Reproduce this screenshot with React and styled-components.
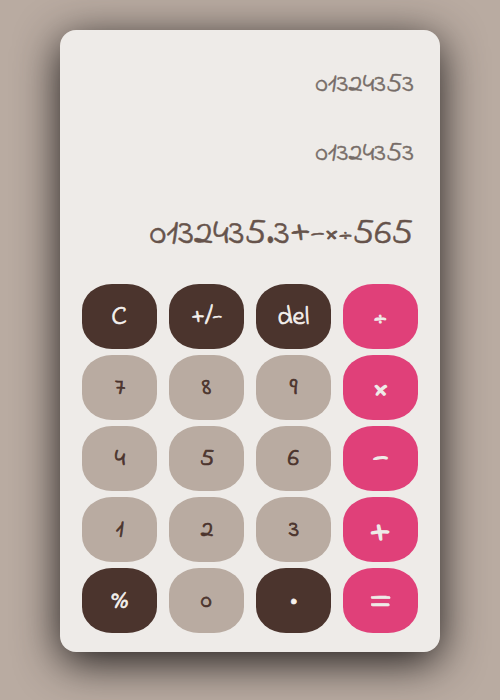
import React from "react";
import styled, { createGlobalStyle, css } from "styled-components";

const GlobalStyle = createGlobalStyle`
  * { box-sizing: border-box; }
  body {
    margin: 0;
    background: #b9aba1;
    font-family: "Indie Flower", "Open Sans", sans-serif;
  }
`;

const Page = styled.main`
  height: 700px;
  padding-top: 30px;
  overflow: hidden;
`;

const Calculator = styled.section`
  width: 380px;
  height: 622px;
  margin: 0 auto;
  padding: 20px 22px 19px;
  border-radius: 16px;
  background: #eeebe8;
  box-shadow: 0 10px 44px #1e1a1a;
`;

const Display = styled.div`
  display: flex;
  flex-direction: column;
  height: 234px;
`;

const HistoryLine = styled.div`
  height: 69px;
  padding-right: 4px;
  line-height: 69px;
  font-size: 26.5px;
  text-align: right;
  color: #766c67;
  transform: scaleX(1.07);
  transform-origin: calc(100% - 4px) 50%;
  -webkit-text-stroke: 0.4px currentColor;
`;

const CurrentLine = styled.div`
  height: 90px;
  padding-right: 5px;
  line-height: 93px;
  font-size: 35px;
  text-align: right;
  white-space: nowrap;
  color: #66534b;
  transform: scaleX(1.09);
  transform-origin: calc(100% - 5px) 50%;
  -webkit-text-stroke: 0.5px currentColor;
`;

const Operator = styled.span`
  font-size: ${({ $size }) => $size}px;
  line-height: 1;
  -webkit-text-stroke: ${({ $stroke = 0.6 }) => $stroke}px currentColor;
`;

const Keypad = styled.div`
  display: grid;
  grid-template-columns: repeat(4, 75px);
  grid-auto-rows: 65px;
  gap: 6px 12px;
`;

const tones = {
  digit: css`
    background: #b9aba1;
    color: #4b342d;
    font-size: 24px;
    -webkit-text-stroke: 0.7px currentColor;
  `,
  action: css`
    background: #4b342d;
    color: #f5f1ee;
    font-size: 26px;
    -webkit-text-stroke: 0.7px currentColor;
  `,
  operator: css`
    background: #e04079;
    color: #eeebe8;
    -webkit-text-stroke: 1.4px currentColor;
  `,
};

const Key = styled.button`
  display: flex;
  align-items: center;
  justify-content: center;
  padding: 0;
  border: 0;
  border-radius: 40%;
  font-family: inherit;
  ${({ $tone }) => tones[$tone]}
  ${({ $size }) => $size && css`font-size: ${$size}px;`}
  ${({ $stroke }) => $stroke && css`-webkit-text-stroke-width: ${$stroke}px;`}
`;

const Label = styled.span`
  transform: translateY(${({ $shift }) => $shift}px) scaleX(${({ $stretch }) => $stretch});
`;

const keys = [
  { label: "C", tone: "action", stretch: 1.1 },
  { label: "+/-", tone: "action", stretch: 0.98 },
  { label: "del", tone: "action" },
  { label: "÷", tone: "operator", size: 29, shift: 3, stroke: 1.1, stretch: 0.92 },
  { label: "7" },
  { label: "8" },
  { label: "9" },
  { label: "×", tone: "operator", size: 32, shift: 5, stroke: 1.6 },
  { label: "4" },
  { label: "5" },
  { label: "6" },
  { label: "-", tone: "operator", size: 37, shift: 0, stroke: 1.7, stretch: 1.08 },
  { label: "1" },
  { label: "2" },
  { label: "3" },
  { label: "+", tone: "operator", size: 38, shift: 4, stroke: 1.3 },
  { label: "%", tone: "action", size: 25 },
  { label: "0" },
  { label: "•", tone: "action" },
  { label: "=", tone: "operator", size: 48, shift: 2, stroke: 0.5 },
];

export default function App() {
  return (
    <>
      <GlobalStyle />
      <Page>
        <Calculator>
          <Display>
            <HistoryLine>01324353</HistoryLine>
            <HistoryLine>01324353</HistoryLine>
            <CurrentLine>
              0132435.3<Operator $size={36}>+</Operator>
              <Operator $size={35}>-</Operator>
              <Operator $size={28} $stroke={1}>×</Operator>
              <Operator $size={26}>÷</Operator>565
            </CurrentLine>
          </Display>
          <Keypad>
            {keys.map(({ label, tone = "digit", size, stroke, shift = 1, stretch = 1.05 }) => (
              <Key key={label} $tone={tone} $size={size} $stroke={stroke}>
                <Label $shift={shift} $stretch={stretch}>{label}</Label>
              </Key>
            ))}
          </Keypad>
        </Calculator>
      </Page>
    </>
  );
}
